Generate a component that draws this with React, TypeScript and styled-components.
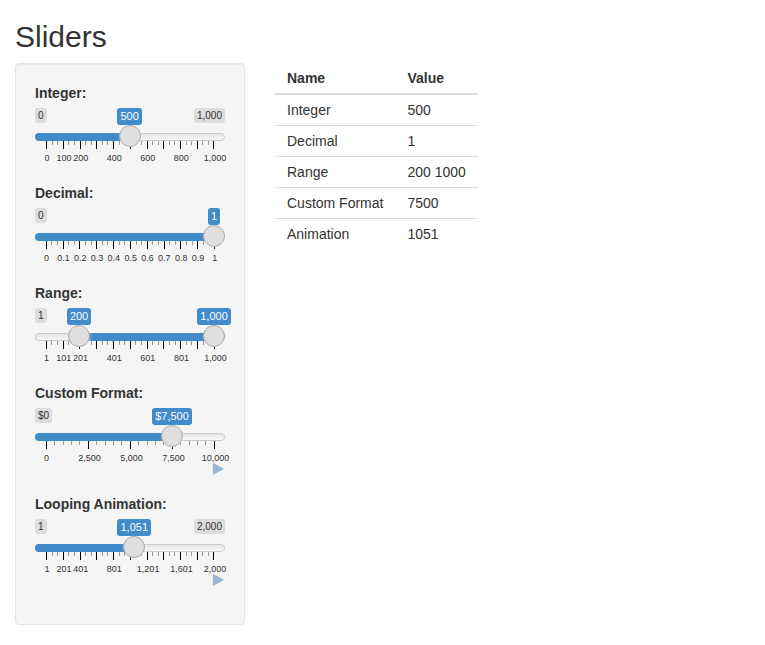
import React from "react";
import styled, { createGlobalStyle } from "styled-components";

const GlobalStyle = createGlobalStyle`
  *, *::before, *::after { box-sizing: border-box; }
  body {
    margin: 0;
    background: #fff;
    color: #333;
    font: 14px/20px "Liberation Sans", Arial, sans-serif;
  }
`;

const Page = styled.div`
  display: flow-root;
  padding: 0 15px;
`;

const Title = styled.h2`
  margin: 20px 0 10px;
  font-size: 30px;
  font-weight: 500;
  line-height: 33px;
`;

const Columns = styled.div`
  display: flex;
  align-items: flex-start;
  gap: 30px;
`;

const Sidebar = styled.form`
  width: 230px;
  min-height: 562px;
  padding: 19px;
  background: #f5f5f5;
  border: 1px solid #e3e3e3;
  border-radius: 4px;
  box-shadow: inset 0 1px 1px rgba(0, 0, 0, 0.05);
`;

const Field = styled.div`
  margin-bottom: 15px;
`;

const FieldLabel = styled.label`
  display: block;
  margin-bottom: 5px;
  font-weight: 700;
`;

const SliderBox = styled.div`
  position: relative;
  height: 60px;
  user-select: none;
`;

const Line = styled.div`
  position: absolute;
  top: 25px;
  left: 0;
  width: 100%;
  height: 8px;
  background: linear-gradient(to bottom, #dedede -50%, #fff 150%);
  border: 1px solid #ccc;
  border-radius: 8px;
`;

const Bar = styled.div<{ $from: number; $to: number; $rounded: boolean }>`
  position: absolute;
  top: 25px;
  left: ${(p) => p.$from}px;
  width: ${(p) => p.$to - p.$from}px;
  height: 8px;
  background: #428bca;
  border-radius: ${(p) => (p.$rounded ? "8px 0 0 8px" : "0")};
`;

const Handle = styled.div<{ $at: number }>`
  position: absolute;
  top: 17px;
  left: ${(p) => p.$at - 11}px;
  width: 22px;
  height: 22px;
  background: #dedede;
  border: 1px solid #ababab;
  border-radius: 22px;
  box-shadow: 1px 1px 3px rgba(255, 255, 255, 0.3);
`;

const Limit = styled.span<{ $side: "left" | "right" }>`
  position: absolute;
  top: 0;
  ${(p) => p.$side}: 0;
  padding: 1px 3px;
  font-size: 10px;
  line-height: 1.333;
  background: rgba(0, 0, 0, 0.1);
  border-radius: 3px;
`;

const BubbleAnchor = styled.div<{ $at: number }>`
  position: absolute;
  top: 0;
  left: ${(p) => p.$at - 40}px;
  width: 80px;
  display: flex;
  justify-content: center;
`;

const Bubble = styled.span`
  padding: 1px 3px;
  color: #fff;
  font-size: 11px;
  line-height: 1.333;
  background: #428bca;
  border-radius: 3px;
`;

const Tick = styled.span<{ $at: number; $major: boolean }>`
  position: absolute;
  top: 33px;
  left: ${(p) => p.$at}px;
  width: 1px;
  height: ${(p) => (p.$major ? 8 : 4)}px;
  background: ${(p) => (p.$major ? "#000" : "#999")};
`;

const TickText = styled.span<{ $at: number }>`
  position: absolute;
  top: 46px;
  left: ${(p) => p.$at - 20}px;
  width: 40px;
  color: #333;
  font-size: 9px;
  line-height: 9px;
  text-align: center;
`;

const Controls = styled.div`
  position: relative;
  display: flex;
  justify-content: flex-end;
  height: 16px;
  margin-top: -5px;
`;

const PlayIcon = styled.svg`
  width: 14px;
  height: 14px;
  fill: #337ab7;
  opacity: 0.5;
`;

const Table = styled.table`
  border-collapse: separate;
  border-spacing: 0;
`;

const HeadCell = styled.th`
  padding: 5px 12px;
  text-align: left;
  border-bottom: 2px solid #ddd;
`;

const Row = styled.tr`
  & + & > td {
    border-top: 1px solid #ddd;
  }
`;

const Cell = styled.td`
  padding: 5px 12px;
`;

type SliderSpec = {
  label: string;
  min: number;
  max: number;
  values: number[];
  majors: number;
  minors: number;
  gridStart: number;
  gridWidth: number;
  texts: Record<number, string>;
  prefix?: string;
  hideMax?: boolean;
  animated?: boolean;
};

const TRACK = 168;
const HALF_HANDLE = 11;

const sliders: SliderSpec[] = [
  {
    label: "Integer:", min: 0, max: 1000, values: [500], majors: 10, minors: 3,
    gridStart: 11.15, gridWidth: 167.3,
    texts: { 0: "0", 1: "100", 2: "200", 4: "400", 6: "600", 8: "800", 10: "1,000" },
  },
  {
    label: "Decimal:", min: 0, max: 1, values: [1], majors: 10, minors: 3,
    gridStart: 10.8, gridWidth: 168.2, hideMax: true,
    texts: {
      0: "0", 1: "0.1", 2: "0.2", 3: "0.3", 4: "0.4", 5: "0.5",
      6: "0.6", 7: "0.7", 8: "0.8", 9: "0.9", 10: "1",
    },
  },
  {
    label: "Range:", min: 1, max: 1000, values: [200, 1000], majors: 10, minors: 3,
    gridStart: 10.8, gridWidth: 168, hideMax: true,
    texts: { 0: "1", 1: "101", 2: "201", 4: "401", 6: "601", 8: "801", 10: "1,000" },
  },
  {
    label: "Custom Format:", min: 0, max: 10000, values: [7500], majors: 4, minors: 5,
    gridStart: 10.8, gridWidth: 168, prefix: "$", hideMax: true, animated: true,
    texts: { 0: "0", 1: "2,500", 2: "5,000", 3: "7,500", 4: "10,000" },
  },
  {
    label: "Looping Animation:", min: 1, max: 2000, values: [1051], majors: 10, minors: 3,
    gridStart: 11.15, gridWidth: 167.3, animated: true,
    texts: { 0: "1", 1: "201", 2: "401", 4: "801", 6: "1,201", 8: "1,601", 10: "2,000" },
  },
];

const results = [
  ["Integer", "500"],
  ["Decimal", "1"],
  ["Range", "200 1000"],
  ["Custom Format", "7500"],
  ["Animation", "1051"],
];

// Wider captions sit slightly further right of their tick.
const captionShift = (text: string) => {
  if (text.length >= 5) return 1.6;
  return text.length === 3 && !text.includes(".") ? 1.2 : 0.8;
};

function Slider({ spec }: { spec: SliderSpec }) {
  const { min, max, values, majors, minors, gridStart, gridWidth, texts } = spec;
  const format = (n: number) => (spec.prefix ?? "") + n.toLocaleString("en-US");
  const place = (n: number) => HALF_HANDLE + ((n - min) / (max - min)) * TRACK;
  const bubblePlace = (n: number) => place(n) - (format(n).length === 3 ? 0.4 : 0);
  const steps = majors * minors;
  const isRange = values.length > 1;

  return (
    <SliderBox>
      <Line />
      {Array.from({ length: steps + 1 }, (_, i) => (
        <Tick key={i} $at={gridStart + (gridWidth * i) / steps} $major={i % minors === 0} />
      ))}
      {Object.entries(texts).map(([i, text]) => (
        <TickText key={i} $at={gridStart + captionShift(text) + (gridWidth * Number(i)) / majors}>
          {text}
        </TickText>
      ))}
      <Bar
        $from={isRange ? place(values[0]) : 0}
        $to={place(values[values.length - 1])}
        $rounded={!isRange}
      />
      <Limit $side="left">{format(min)}</Limit>
      {!spec.hideMax && <Limit $side="right">{format(max)}</Limit>}
      {values.map((value) => (
        <React.Fragment key={value}>
          <BubbleAnchor $at={bubblePlace(value)}>
            <Bubble>{format(value)}</Bubble>
          </BubbleAnchor>
          <Handle $at={place(value)} />
        </React.Fragment>
      ))}
    </SliderBox>
  );
}

export default function App() {
  return (
    <>
      <GlobalStyle />
      <Page>
        <Title>Sliders</Title>
        <Columns>
          <Sidebar>
            {sliders.map((spec) => (
              <Field key={spec.label}>
                <FieldLabel>{spec.label}</FieldLabel>
                <Slider spec={spec} />
                {spec.animated && (
                  <Controls>
                    <PlayIcon viewBox="0 0 14 14" aria-label="Play">
                      <path d="M2.2 0.1 L12.4 5.6 Q12.8 5.9 12.4 6.2 L2.2 11.8 Q1.9 11.9 1.9 11.5 V0.4 Q1.9 0 2.2 0.1 Z" />
                    </PlayIcon>
                  </Controls>
                )}
              </Field>
            ))}
          </Sidebar>
          <Table>
            <thead>
              <tr>
                <HeadCell>Name</HeadCell>
                <HeadCell>Value</HeadCell>
              </tr>
            </thead>
            <tbody>
              {results.map(([name, value]) => (
                <Row key={name}>
                  <Cell>{name}</Cell>
                  <Cell>{value}</Cell>
                </Row>
              ))}
            </tbody>
          </Table>
        </Columns>
      </Page>
    </>
  );
}
